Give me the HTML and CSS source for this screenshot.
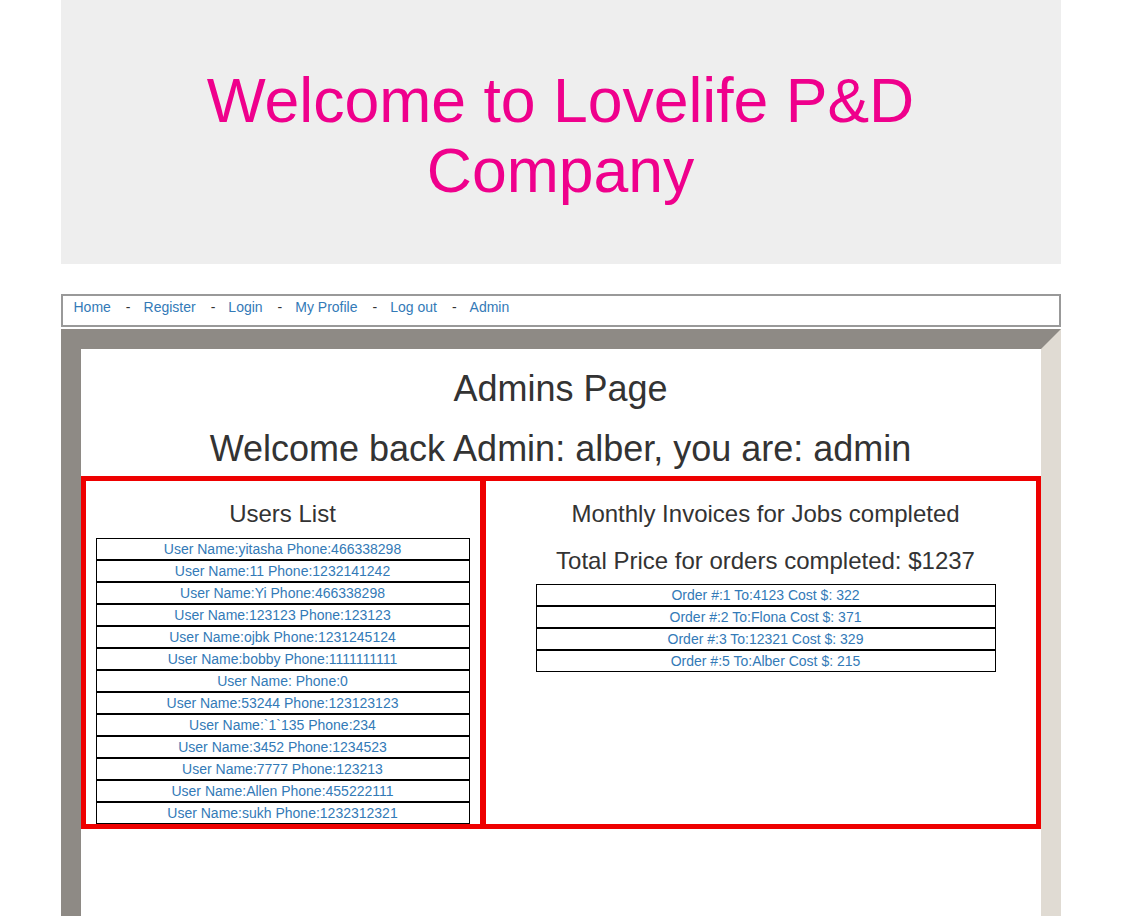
FILE: index.html
```html
<!DOCTYPE html>
<html>
<head>
<meta charset="utf-8">
<title>Admins Page</title>
<link rel="stylesheet" href="styles.css">
</head>
<body>
<div class="page">
  <header class="banner">
    <h1 class="banner-title">Welcome to Lovelife P&amp;D Company</h1>
  </header>
  <nav class="menu">
    <a href="#">Home</a><span class="sep">-</span><a href="#">Register</a><span class="sep">-</span><a href="#">Login</a><span class="sep">-</span><a href="#">My Profile</a><span class="sep">-</span><a href="#">Log out</a><span class="sep">-</span><a href="#">Admin</a>
  </nav>
  <main class="frame">
    <div class="inner">
      <h1 class="title">Admins Page</h1>
      <h1 class="title title-last">Welcome back Admin: alber, you are: admin</h1>
      <div class="panels">
        <section class="panel">
          <h3 class="panel-head">Users List</h3>
          <div class="list list-users">
            <a class="row" href="#">User Name:yitasha Phone:466338298</a>
            <a class="row" href="#">User Name:11 Phone:1232141242</a>
            <a class="row" href="#">User Name:Yi Phone:466338298</a>
            <a class="row" href="#">User Name:123123 Phone:123123</a>
            <a class="row" href="#">User Name:ojbk Phone:1231245124</a>
            <a class="row" href="#">User Name:bobby Phone:1111111111</a>
            <a class="row" href="#">User Name: Phone:0</a>
            <a class="row" href="#">User Name:53244 Phone:123123123</a>
            <a class="row" href="#">User Name:`1`135 Phone:234</a>
            <a class="row" href="#">User Name:3452 Phone:1234523</a>
            <a class="row" href="#">User Name:7777 Phone:123213</a>
            <a class="row" href="#">User Name:Allen Phone:455222111</a>
            <a class="row" href="#">User Name:sukh Phone:1232312321</a>
          </div>
        </section>
        <section class="panel panel-right">
          <h3 class="panel-head">Monthly Invoices for Jobs completed</h3>
          <h3 class="panel-head">Total Price for orders completed: $1237</h3>
          <div class="list list-orders">
            <a class="row" href="#">Order #:1 To:4123 Cost $: 322</a>
            <a class="row" href="#">Order #:2 To:Flona Cost $: 371</a>
            <a class="row" href="#">Order #:3 To:12321 Cost $: 329</a>
            <a class="row" href="#">Order #:5 To:Alber Cost $: 215</a>
          </div>
        </section>
      </div>
    </div>
  </main>
</div>
</body>
</html>
```
FILE: styles.css
```css
html, body {
  margin: 0;
  padding: 0;
  background: #fff;
}
body {
  font-family: "Liberation Sans", Arial, sans-serif;
  font-size: 14px;
  line-height: 20px;
  color: #333;
}
a {
  color: #337ab7;
  text-decoration: none;
}
.page {
  width: 1000px;
  margin: 0 auto;
}
.banner {
  background: #eee;
  height: 264px;
  box-sizing: border-box;
  padding: 65px 100px 0;
}
.banner-title {
  margin: 0;
  font-weight: normal;
  font-size: 62.5px;
  line-height: 70px;
  color: #ef008c;
  text-align: center;
}
.menu {
  margin-top: 30px;
  border: 2px solid #999;
  padding: 1px 11px 8px;
  height: 20px;
}
.sep {
  margin: 0 13px 0 15px;
  color: #333;
}
.frame {
  margin-top: 2px;
  border-style: solid;
  border-width: 20px 20px 0 20px;
  border-color: #8e8a85 #e0dbd3 #e0dbd3 #8e8a85;
  min-height: 620px;
}
.inner {
  background: #fff;
}
.title {
  margin: 20px 0 10px;
  font-size: 36px;
  line-height: 1.1;
  font-weight: normal;
  text-align: center;
  color: #333;
}
.title-last {
  margin-bottom: 8px;
}
.panels {
  display: grid;
  grid-template-columns: 400px 1fr;
  border: 2px solid #ee0000;
}
.panel {
  border: 3px solid #ee0000;
}
.panel-right {
  padding-left: 10px;
}
.panel-head {
  margin: 20px 0 10px;
  font-size: 24px;
  line-height: 1.1;
  font-weight: normal;
  text-align: center;
  color: #333;
}
.list {
  display: flex;
  flex-direction: column;
}
.list-users {
  margin: 0 10px;
}
.list-orders {
  width: 460px;
  margin: 0 auto;
}
.row {
  display: block;
  border: 1px solid #000;
  text-align: center;
  line-height: 20px;
  font-size: 14px;
}
```
